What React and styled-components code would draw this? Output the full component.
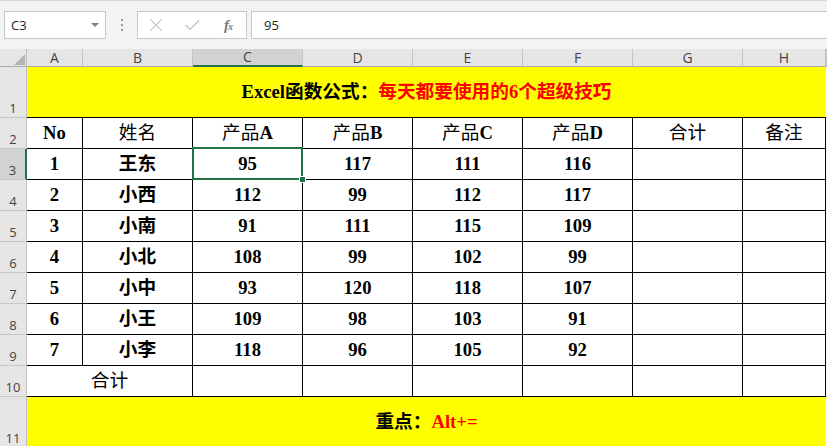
import React from "react";
import styled, { createGlobalStyle } from "styled-components";
import { X, Check } from "lucide-react";

const GlobalStyle = createGlobalStyle`
  html, body { margin: 0; padding: 0; background: #fff; overflow: hidden; }
  body { font-family: "Liberation Serif", "Noto Sans CJK SC", serif; }
`;

const UI = `"Open Sans", "Liberation Sans", sans-serif`;
const SERIF = `"Liberation Serif", "Noto Sans CJK SC", serif`;
const GREEN = "#217346";

const Window = styled.div`
  width: 827px;
  height: 446px;
  overflow: hidden;
  display: flex;
  flex-direction: column;
`;

const FormulaBar = styled.div`
  flex: none;
  height: 49px;
  box-sizing: border-box;
  background: #f3f3f3;
  border-top: 1px solid #d8d8d8;
  display: flex;
  align-items: flex-start;
  padding: 10px 0 0 4px;
`;

const Box = styled.div`
  height: 28px;
  box-sizing: border-box;
  background: #fff;
  border: 1px solid #c6c6c6;
  display: flex;
  align-items: center;
  font-family: ${UI};
  font-size: 13px;
  color: #222;
`;

const NameBox = styled(Box)`
  width: 102px;
  justify-content: space-between;
  padding: 0 6px 0 6px;
`;

const Caret = styled.span`
  width: 0;
  height: 0;
  border-left: 4px solid transparent;
  border-right: 4px solid transparent;
  border-top: 4px solid #808080;
`;

const Grip = styled.div`
  width: 31px;
  height: 28px;
  display: flex;
  flex-direction: column;
  align-items: center;
  justify-content: center;
  gap: 3px;
`;

const Dot = styled.span`
  width: 2px;
  height: 2px;
  background: #9a9a9a;
`;

const FxBox = styled(Box)`
  width: 110px;
`;

const FxSlot = styled.span`
  width: 36px;
  display: flex;
  justify-content: center;
  align-items: center;
  color: #b9b9b9;
`;

const FxMark = styled.span`
  font-family: ${SERIF};
  font-style: italic;
  font-weight: 700;
  font-size: 15px;
  color: #777;
  letter-spacing: -1px;
  sub {
    font-size: 10px;
    vertical-align: baseline;
  }
`;

const FormulaInput = styled(Box)`
  flex: 1;
  margin-left: 4px;
  padding-left: 12px;
  border-right: none;
`;

const Sheet = styled.div`
  display: grid;
  grid-template-columns: 27px 56px repeat(6, 110px) 83px 1fr;
  grid-template-rows: 18px 51px repeat(9, 31px) 51px;
  font-family: ${SERIF};
`;

const Head = styled.div`
  box-sizing: border-box;
  background: ${(p) => (p.$active ? "#d2d2d2" : "#e6e6e6")};
  font-family: ${UI};
  color: #444;
  display: flex;
  justify-content: center;
`;

const Corner = styled(Head)`
  border-right: 1px solid #bfbfbf;
  border-bottom: 1px solid #ababab;
  justify-content: flex-end;
  align-items: flex-end;
  padding: 0 1px 1px 0;
`;

const ColHead = styled(Head)`
  border-right: 1px solid #c3c3c3;
  border-bottom: ${(p) => (p.$active ? `2px solid ${GREEN}` : "1px solid #ababab")};
  align-items: flex-end;
  font-size: 14px;
  line-height: 17px;
`;

const RowHead = styled(Head)`
  border-right: ${(p) => (p.$active ? `2px solid ${GREEN}` : "1px solid #bfbfbf")};
  border-bottom: 1px solid #c6c6c6;
  align-items: flex-end;
  font-size: 13px;
  line-height: 16px;
  padding-bottom: 1px;
`;

const Cell = styled.div`
  box-sizing: border-box;
  position: relative;
  background: #fff;
  border-right: 1px solid #000;
  border-bottom: 1px solid #000;
  display: flex;
  align-items: center;
  justify-content: center;
  font-size: 18.67px;
  line-height: 1;
  font-weight: ${(p) => (p.$light ? 400 : 700)};
  color: #000;
  grid-column: ${(p) => (p.$span ? `span ${p.$span}` : "auto")};
  z-index: ${(p) => (p.$selected ? 2 : "auto")};

  &::after {
    content: "";
    display: ${(p) => (p.$selected ? "block" : "none")};
    position: absolute;
    left: -1px;
    top: -2px;
    right: -1px;
    bottom: -1px;
    border: 2px solid ${GREEN};
  }
  &::before {
    content: "";
    display: ${(p) => (p.$selected ? "block" : "none")};
    position: absolute;
    right: -4px;
    bottom: -4px;
    width: 5px;
    height: 5px;
    background: ${GREEN};
    border: 1px solid #fff;
    z-index: 3;
  }
`;

const Banner = styled(Cell)`
  background: #ffff00;
  border-right: none;
  border-bottom: ${(p) => (p.$last ? "none" : "1px solid #000")};
  grid-column: span 8;
`;

const Red = styled.span`
  color: #ff0000;
`;

const Han = styled.span`
  font-weight: 400;
`;

const Filler = styled.div`
  background: #fff;
  border-bottom: 1px solid #dadada;
`;

const letters = ["A", "B", "C", "D", "E", "F", "G", "H"];

const rows = [
  [1, "王东", 95, 117, 111, 116],
  [2, "小西", 112, 99, 112, 117],
  [3, "小南", 91, 111, 115, 109],
  [4, "小北", 108, 99, 102, 99],
  [5, "小中", 93, 120, 118, 107],
  [6, "小王", 109, 98, 103, 91],
  [7, "小李", 118, 96, 105, 92],
];

const CornerMark = () => (
  <svg width="11" height="11" viewBox="0 0 11 11">
    <polygon points="11,0 11,11 0,11" fill="#b5b5b5" />
  </svg>
);

export default function App() {
  return (
    <Window>
      <GlobalStyle />
      <FormulaBar>
        <NameBox>
          <span>C3</span>
          <Caret />
        </NameBox>
        <Grip>
          <Dot />
          <Dot />
          <Dot />
        </Grip>
        <FxBox>
          <FxSlot>
            <X size={22} strokeWidth={1.1} />
          </FxSlot>
          <FxSlot>
            <Check size={19} strokeWidth={1.4} />
          </FxSlot>
          <FxSlot>
            <FxMark>
              f<sub>x</sub>
            </FxMark>
          </FxSlot>
        </FxBox>
        <FormulaInput>95</FormulaInput>
      </FormulaBar>

      <Sheet>
        <Corner>
          <CornerMark />
        </Corner>
        {letters.map((l) => (
          <ColHead key={l} $active={l === "C"}>
            {l}
          </ColHead>
        ))}
        <ColHead />

        <RowHead>1</RowHead>
        <Banner>
          Excel函数公式：<Red>每天都要使用的6个超级技巧</Red>
        </Banner>
        <Filler />

        <RowHead>2</RowHead>
        <Cell>No</Cell>
        <Cell $light>姓名</Cell>
        {["A", "B", "C", "D"].map((p) => (
          <Cell key={p}>
            <Han>产品</Han>
            {p}
          </Cell>
        ))}
        <Cell $light>合计</Cell>
        <Cell $light>备注</Cell>
        <Filler />

        {rows.map((r, i) => (
          <React.Fragment key={r[0]}>
            <RowHead $active={i === 0}>{i + 3}</RowHead>
            {r.map((v, j) => (
              <Cell key={j} $selected={i === 0 && j === 2}>
                {v}
              </Cell>
            ))}
            <Cell />
            <Cell />
            <Filler />
          </React.Fragment>
        ))}

        <RowHead>10</RowHead>
        <Cell $span={2} $light>
          合计
        </Cell>
        {[0, 1, 2, 3, 4, 5].map((k) => (
          <Cell key={k} />
        ))}
        <Filler />

        <RowHead>11</RowHead>
        <Banner $last>
          重点：<Red>Alt+=</Red>
        </Banner>
        <Filler />
      </Sheet>
    </Window>
  );
}
